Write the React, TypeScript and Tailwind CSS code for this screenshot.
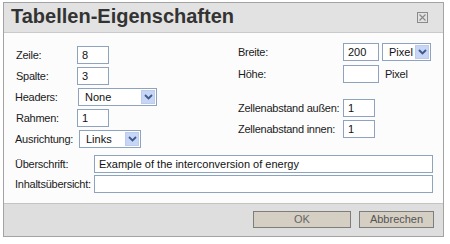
import React from 'react';

const font = { fontFamily: '"Liberation Sans", Arial, sans-serif' };

const TextBox: React.FC<{ value?: string; className?: string }> = ({ value = '', className = '' }) => (
  <div
    className={`h-[18px] border border-[#8ea3bd] bg-white pl-[4px] text-[11px] leading-[16px] text-[#111] ${className}`}
  >
    {value}
  </div>
);

const Chevron: React.FC = () => (
  <svg width="9" height="6" viewBox="0 0 9 6">
    <path d="M1 1 L4.5 4.5 L8 1" fill="none" stroke="#3d5a8a" strokeWidth="1.8" />
  </svg>
);

const SelectBox: React.FC<{ value: string; className?: string }> = ({ value, className = '' }) => (
  <div
    className={`flex h-[18px] items-stretch border border-[#8ea3bd] bg-white text-[11px] leading-[16px] text-[#111] ${className}`}
  >
    <span className="flex-1 pl-[6px]">{value}</span>
    <span className="m-[1px] flex w-[14px] items-center justify-center border border-[#bccbee] bg-[#c7d5f6]">
      <Chevron />
    </span>
  </div>
);

const Label: React.FC<{ text: string; className?: string }> = ({ text, className = '' }) => (
  <span className={`text-[11px] tracking-[-0.25px] text-[#1a1a1a] ${className}`}>{text}</span>
);

const Row: React.FC<{ children: React.ReactNode; className?: string }> = ({ children, className = '' }) => (
  <div className={`flex h-[18px] items-center ${className}`}>{children}</div>
);

const CloseIcon: React.FC = () => (
  <svg width="11" height="11" viewBox="0 0 11 11">
    <rect x="0.5" y="0.5" width="10" height="10" fill="none" stroke="#8a8a8a" />
    <path d="M2.5 2.5 L8.5 8.5 M8.5 2.5 L2.5 8.5" stroke="#8a8a8a" strokeWidth="1.2" />
  </svg>
);

const App: React.FC = () => {
  return (
    <div className="h-[244px] w-[450px] bg-white pl-[3px] pt-[2px]" style={font}>
      <div className="flex h-[235px] w-[441px] flex-col border border-[#a3a3a3] bg-[#fcfcfc]">
        {/* title bar */}
        <div className="flex h-[30px] items-center justify-between border-b border-[#c9c9c9] bg-[#e2e2e2] pl-[7px] pr-[15px]">
          <span className="pb-[2px] text-[20px] font-bold leading-[23px] text-[#333]">Tabellen-Eigenschaften</span>
          <CloseIcon />
        </div>

        {/* content */}
        <div className="flex-1 pl-[11px] pt-[10px]">
          <div className="flex items-start">
            <div className="mt-[3px] flex w-[223px] flex-col gap-[3px]">
              <Row>
                <Label text="Zeile:" className="w-[62px] pl-[1px]" />
                <TextBox value="8" className="w-[32px]" />
              </Row>
              <Row>
                <Label text="Spalte:" className="w-[62px] pl-[1px]" />
                <TextBox value="3" className="w-[32px]" />
              </Row>
              <Row>
                <Label text="Headers:" className="w-[63px]" />
                <SelectBox value="None" className="w-[79px]" />
              </Row>
              <Row>
                <Label text="Rahmen:" className="w-[62px] pl-[1px]" />
                <TextBox value="1" className="w-[32px]" />
              </Row>
              <Row>
                <Label text="Ausrichtung:" className="w-[64px]" />
                <SelectBox value="Links" className="w-[62px]" />
              </Row>
            </div>

            <div className="flex flex-col">
              <Row>
                <Label text="Breite:" className="w-[105px]" />
                <TextBox value="200" className="w-[36px] pl-[3px]" />
                <SelectBox value="Pixel" className="ml-[3px] w-[49px]" />
              </Row>
              <Row className="mt-[4px]">
                <Label text="Höhe:" className="w-[105px]" />
                <TextBox className="w-[36px]" />
                <Label text="Pixel" className="ml-[6px]" />
              </Row>
              <Row className="mt-[16px]">
                <Label text="Zellenabstand außen:" className="w-[105px]" />
                <TextBox value="1" className="w-[32px]" />
              </Row>
              <Row className="mt-[3px]">
                <Label text="Zellenabstand innen:" className="w-[105px]" />
                <TextBox value="1" className="w-[32px]" />
              </Row>
            </div>
          </div>

          <div className="mt-[7px] flex flex-col gap-[2px]">
            <Row>
              <Label text="Überschrift:" className="w-[79px]" />
              <TextBox value="Example of the interconversion of energy" className="w-[339px]" />
            </Row>
            <Row>
              <Label text="Inhaltsübersicht:" className="w-[79px]" />
              <TextBox className="w-[339px]" />
            </Row>
          </div>
        </div>

        {/* footer */}
        <div className="flex h-[33px] items-start justify-end gap-[8px] border-t border-[#c4c4c4] bg-[#dedede] pr-[9px] pt-[7px]">
          <button className="h-[17px] w-[98px] border border-[#7d7d7d] bg-[#d5cfc3] text-[11px] leading-[15px] text-[#666]">
            OK
          </button>
          <button className="h-[17px] w-[75px] border border-[#7d7d7d] bg-[#d5cfc3] text-[11px] leading-[15px] text-[#555]">
            Abbrechen
          </button>
        </div>
      </div>
    </div>
  );
};

export default App;
